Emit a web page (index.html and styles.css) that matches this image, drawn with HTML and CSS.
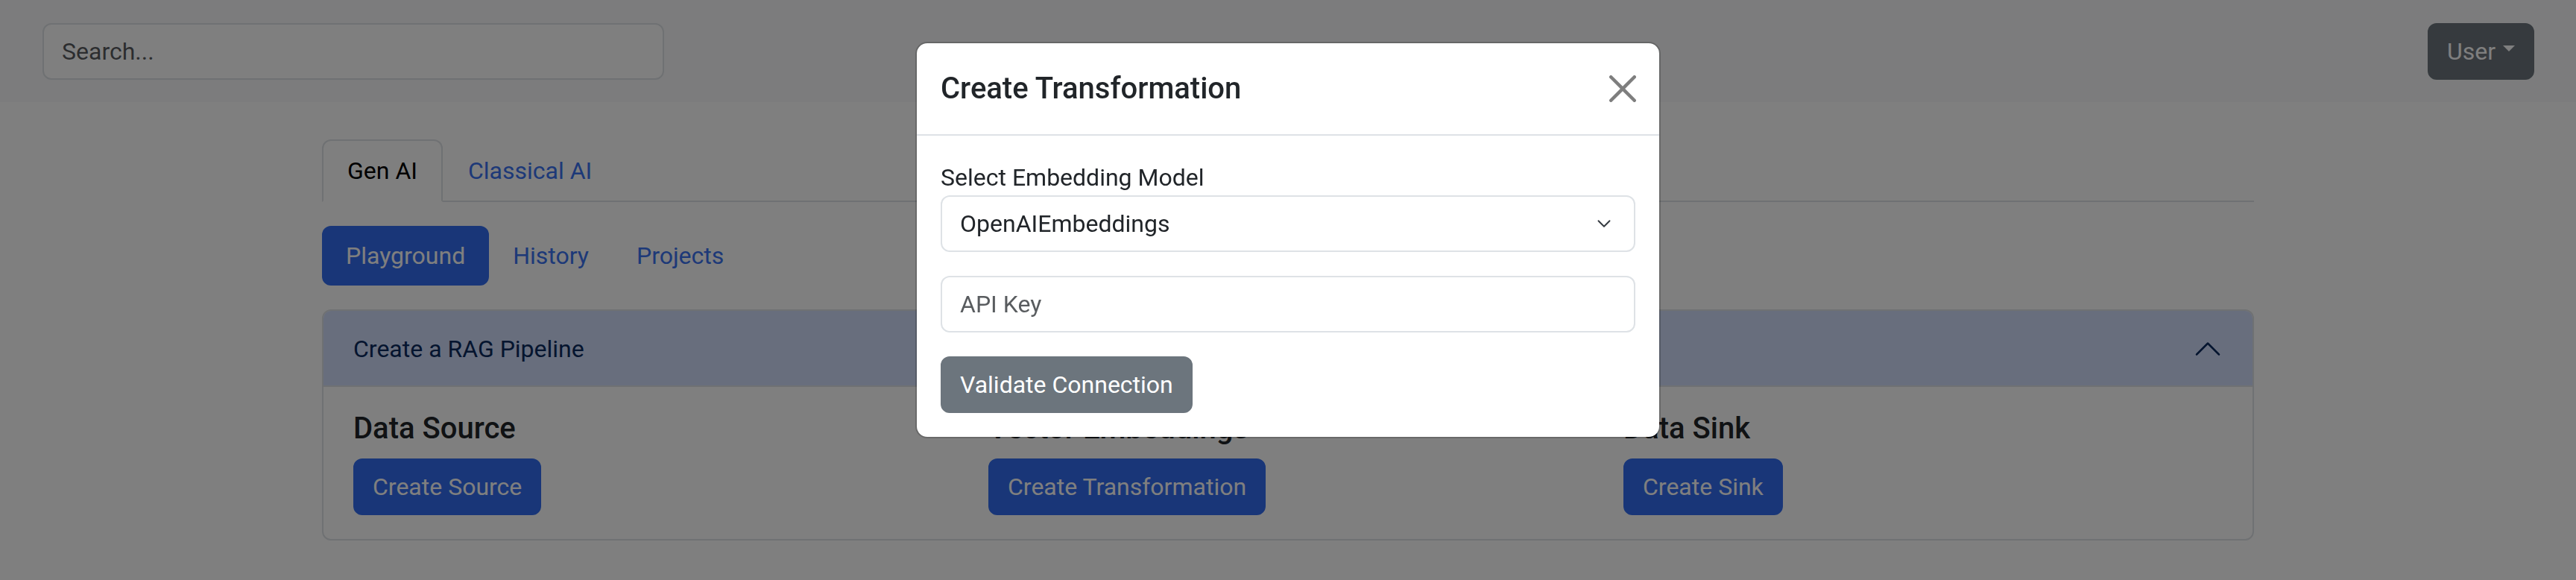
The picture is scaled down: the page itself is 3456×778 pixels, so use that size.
FILE: index.html
```html
<!DOCTYPE html>
<html lang="en">
<head>
<meta charset="utf-8">
<title>RAG Playground</title>
<link rel="stylesheet" href="styles.css">
</head>
<body>
<nav class="navbar">
  <input class="form-control search" type="text" placeholder="Search...">
  <button class="btn btn-secondary user-toggle" type="button">User<span class="caret"></span></button>
</nav>

<main class="container">
  <ul class="nav-tabs">
    <li><a class="tab-link active">Gen AI</a></li>
    <li><a class="tab-link">Classical AI</a></li>
  </ul>

  <ul class="nav-pills">
    <li><a class="pill-link active">Playground</a></li>
    <li><a class="pill-link">History</a></li>
    <li><a class="pill-link">Projects</a></li>
  </ul>

  <section class="accordion">
    <button class="accordion-button" type="button">
      <span>Create a RAG Pipeline</span>
      <svg class="accordion-icon" viewBox="0 0 16 16" fill="none" stroke="#0a2a5e" stroke-linecap="round" stroke-linejoin="round"><path d="M2 11L8 5L14 11"/></svg>
    </button>
    <div class="accordion-body">
      <div class="step">
        <h5 class="step-title">Data Source</h5>
        <button class="btn btn-primary" type="button">Create Source</button>
      </div>
      <div class="step">
        <h5 class="step-title">Vector Embeddings</h5>
        <button class="btn btn-primary" type="button">Create Transformation</button>
      </div>
      <div class="step">
        <h5 class="step-title">Data Sink</h5>
        <button class="btn btn-primary" type="button">Create Sink</button>
      </div>
    </div>
  </section>
</main>

<div class="modal-backdrop"></div>
<div class="modal">
  <div class="modal-dialog">
    <div class="modal-content">
      <div class="modal-header">
        <h5 class="modal-title">Create Transformation</h5>
        <button class="btn-close" type="button" aria-label="Close">
          <svg viewBox="0 0 16 16" fill="#000"><path d="M.293.293a1 1 0 0 1 1.414 0L8 6.586 14.293.293a1 1 0 1 1 1.414 1.414L9.414 8l6.293 6.293a1 1 0 0 1-1.414 1.414L8 9.414l-6.293 6.293a1 1 0 0 1-1.414-1.414L6.586 8 .293 1.707a1 1 0 0 1 0-1.414"/></svg>
        </button>
      </div>
      <div class="modal-body">
        <label class="field-label">Select Embedding Model</label>
        <div class="select-wrap">
          <select class="form-select">
            <option>OpenAIEmbeddings</option>
          </select>
          <svg class="select-icon" viewBox="0 0 16 16"><path fill="none" stroke="#343a40" stroke-linecap="round" stroke-linejoin="round" stroke-width="1.3" d="m3 5.5 5 5 5-5"/></svg>
        </div>
        <input class="form-control api-key" type="text" placeholder="API Key">
        <button class="btn btn-secondary" type="button">Validate Connection</button>
      </div>
    </div>
  </div>
</div>
</body>
</html>
```

FILE: styles.css
```css
* { box-sizing: border-box; }

html, body {
  margin: 0;
  padding: 0;
}

body {
  font-family: Roboto, "Liberation Sans", Arial, sans-serif;
  font-size: 32px;
  line-height: 48px;
  color: #212529;
  background: #fff;
  min-height: 778px;
}

ul { list-style: none; margin: 0; padding: 0; }

.navbar {
  height: 137px;
  background: #f8f9fa;
  display: flex;
  align-items: center;
  justify-content: space-between;
  padding: 0 56px 0 57px;
}

.form-control {
  display: block;
  height: 76px;
  padding: 12px 24px;
  font: inherit;
  font-size: 32px;
  line-height: 48px;
  color: #212529;
  background: #fff;
  border: 2px solid #dee2e6;
  border-radius: 12px;
  outline: none;
}
.form-control::placeholder { color: rgba(33, 37, 41, 0.75); }

.search { width: 834px; }

.btn {
  display: inline-block;
  font: inherit;
  font-size: 32px;
  line-height: 48px;
  padding: 12px 24px;
  border: 2px solid transparent;
  border-radius: 12px;
  cursor: pointer;
  white-space: nowrap;
}
.btn-primary { background: #326df0; border-color: #326df0; color: #fff; }
.btn-secondary { background: #6c757d; border-color: #6c757d; color: #fff; }

.user-toggle { display: flex; align-items: center; }
.caret {
  display: inline-block;
  margin-left: 10px;
  margin-top: -8px;
  border-top: 8px solid #fff;
  border-left: 8px solid transparent;
  border-right: 8px solid transparent;
}

.container {
  width: 2640px;
  margin: 0 auto;
  padding: 50px 24px 0;
}

.nav-tabs {
  display: flex;
  border-bottom: 2px solid #dee2e6;
}
.tab-link {
  display: block;
  padding: 16px 32px;
  margin-bottom: -2px;
  border: 2px solid transparent;
  border-radius: 12px 12px 0 0;
  color: #3a72f0;
}
.tab-link.active {
  color: #000;
  background: #fff;
  border-color: #dee2e6 #dee2e6 #fff;
}

.nav-pills {
  display: flex;
  margin-top: 32px;
}
.pill-link {
  display: block;
  padding: 16px 32px;
  border-radius: 12px;
  color: #3a72f0;
}
.pill-link.active { background: #326df0; color: #fff; }

.accordion {
  margin-top: 32px;
  border: 2px solid #dee2e6;
  border-radius: 12px;
  overflow: hidden;
}
.accordion-button {
  width: 100%;
  display: flex;
  align-items: center;
  justify-content: space-between;
  padding: 27px 40px;
  font: inherit;
  font-size: 32px;
  line-height: 48px;
  text-align: left;
  color: #0a2a5e;
  background: #d0dcfa;
  border: 0;
  box-shadow: inset 0 -2px 0 #dee2e6;
}
.accordion-icon {
  width: 40px;
  height: 40px;
  stroke-width: 1;
}

.accordion-body {
  display: grid;
  grid-template-columns: repeat(3, 1fr);
  column-gap: 48px;
  padding: 32px 40px;
}
.step-title {
  margin: 0 0 16px;
  font-size: 40px;
  line-height: 48px;
  font-weight: 500;
  color: #212529;
}

.modal-backdrop {
  position: fixed;
  inset: 0;
  background: rgba(0, 0, 0, 0.5);
}
.modal {
  position: fixed;
  inset: 0;
}
.modal-dialog {
  width: 1000px;
  margin: 56px auto 0;
}
.modal-content {
  background: #fff;
  border: 2px solid rgba(0, 0, 0, 0.175);
  border-radius: 16px;
  background-clip: padding-box;
}
.modal-header {
  display: flex;
  align-items: center;
  padding: 31px 32px;
  border-bottom: 2px solid #dee2e6;
}
.modal-title {
  margin: 0;
  font-size: 40px;
  line-height: 60px;
  font-weight: 500;
  color: #212529;
}
.btn-close {
  margin: -16px -9px -16px auto;
  width: 52px;
  height: 52px;
  padding: 8px;
  border: 0;
  background: transparent;
  opacity: 0.5;
  display: flex;
}
.btn-close svg { width: 36px; height: 36px; }

.modal-body { padding: 32px; }
.field-label { display: block; }

.select-wrap { position: relative; margin-bottom: 32px; }
.form-select {
  display: block;
  width: 100%;
  height: 76px;
  padding: 12px 72px 12px 24px;
  font: inherit;
  font-size: 32px;
  line-height: 48px;
  color: #212529;
  background: #fff;
  border: 2px solid #dee2e6;
  border-radius: 12px;
  appearance: none;
  -webkit-appearance: none;
  outline: none;
}
.select-icon {
  position: absolute;
  right: 26px;
  top: 26px;
  width: 32px;
  height: 24px;
}
.api-key { width: 100%; margin-bottom: 32px; }
```
